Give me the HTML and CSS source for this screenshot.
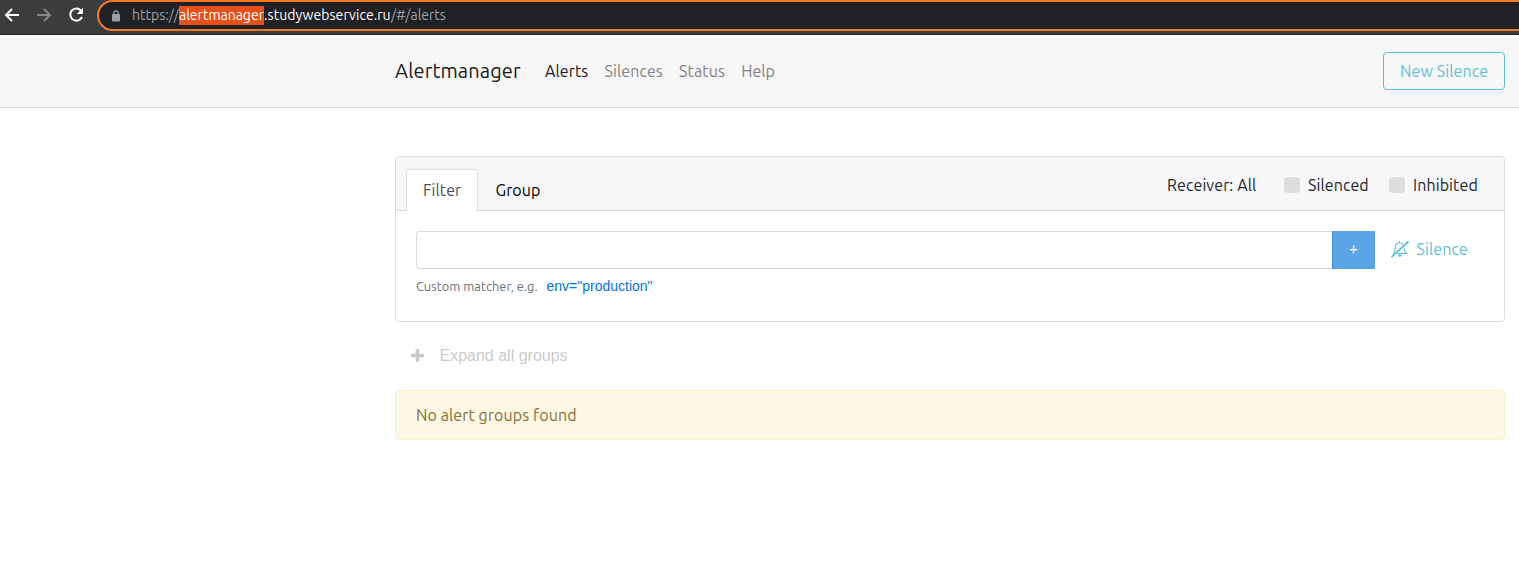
FILE: index.html
```html
<!DOCTYPE html>
<html lang="en">
<head>
<meta charset="utf-8">
<title>Alertmanager</title>
<link rel="stylesheet" href="styles.css">
</head>
<body>
<div class="browser">
  <svg class="back" width="16" height="16" viewBox="0 0 16 16"><path d="M15 8H2M8 2 2 8l6 6" fill="none" stroke="currentColor" stroke-width="2"/></svg>
  <svg class="forward" width="16" height="16" viewBox="0 0 16 16"><path d="M1 8h13M8 2l6 6-6 6" fill="none" stroke="currentColor" stroke-width="2"/></svg>
  <svg class="reload" width="16" height="16" viewBox="0 0 16 16"><path d="M12.8 3.3A6.1 6.1 0 1 0 14 10" fill="none" stroke="currentColor" stroke-width="2"/><path d="M15 .8V7H8.8z" fill="currentColor"/></svg>
  <div class="address">
    <svg class="lock" width="8" height="12" viewBox="0 0 8 12"><rect y="4" width="8" height="7.500" rx="1" fill="currentColor"/><path d="M1.800 4.500V3a2.200 2.200 0 0 1 4.400 0v1.500" fill="none" stroke="currentColor" stroke-width="1.200"/></svg>
    <span class="scheme">https://</span><span class="selected">alertmanager</span><span class="host">.studywebservice.ru</span><span class="path">/#/alerts</span>
  </div>
</div>
<header class="navbar">
  <a class="brand">Alertmanager</a>
  <nav class="links">
    <a class="link current">Alerts</a>
    <a class="link">Silences</a>
    <a class="link">Status</a>
    <a class="link">Help</a>
  </nav>
  <a class="new-silence">New Silence</a>
</header>
<main class="content">
  <section class="card">
    <div class="card-header">
      <a class="tab active">Filter</a>
      <a class="tab">Group</a>
      <div class="options">
        <span class="receiver">Receiver: All</span>
        <span class="box"></span><span class="silenced">Silenced</span>
        <span class="box"></span><span class="inhibited">Inhibited</span>
      </div>
    </div>
    <div class="card-body">
      <div class="row">
        <input class="matcher" type="text" aria-label="Matcher">
        <button class="add">+</button>
        <a class="silence">
          <svg width="19" height="18" viewBox="0 0 19 18" fill="none" stroke="currentColor"><path d="M.5 17 17.500 1.500" stroke-width="1.700"/><path d="M2.300 13.500C4 11.500 4.500 10 4.500 7c0-2.500 1.600-4.300 4-4.300 1.500 0 2.700.600 3.400 1.700M13 7.500c0 2.500.800 4.500 2.500 6H6.500M8.500 2.500V1" stroke-width="1.100"/><path d="M6.800 14.500a2.200 2.200 0 0 0 4.400 0z" fill="currentColor" stroke="none"/></svg>
          <span>Silence</span>
        </a>
      </div>
      <div class="hint"><span class="custom">Custom matcher, e.g.</span><a class="example">env="production"</a></div>
    </div>
  </section>
  <button class="expand"><svg width="13" height="13" viewBox="0 0 13 13"><path d="M5.500 0h2q.8 0 .8.800V4.700h3.900q.8 0 .8.800v2q0 .8-.8.800H8.300v3.900q0 .8-.8.800h-2q-.8 0-.8-.8V8.300H.8q-.8 0-.8-.8v-2q0-.8.8-.8h3.900V.8q0-.8.8-.8z" fill="currentColor"/></svg><span>Expand all groups</span></button>
  <div class="notice">No alert groups found</div>
</main>
</body>
</html>
```
FILE: styles.css
```css
* { box-sizing: border-box; }
body { margin: 0; height: 582px; overflow: hidden; background: #fff; color: #212529; font: 16px/24px "Ubuntu", "Noto Sans", sans-serif; letter-spacing: .1px; white-space: nowrap; }
svg { display: block; flex: none; }
.browser { height: 35px; display: flex; align-items: flex-start; background: #3c3c3c; border-bottom: 1px solid #202124; color: #fff; }
.back { margin: 7px 0 0 4px; }
.forward { margin: 7px 0 0 16px; color: #858585; }
.reload { margin: 7px 0 0 16px; }
.address { display: flex; align-items: center; flex: 1; height: 31px; margin: 0 -30px 0 13px; padding-left: 13px; background: #202124; border: 2px solid #f47b20; border-radius: 16px 0 0 16px; font-size: 14px; line-height: 19px; letter-spacing: 0; }
.lock { margin-right: 12px; color: #9aa0a6; }
.scheme { width: 47px; color: #9aa0a6; }
.selected { width: 85px; background: #e6501b; }
.host { width: 127px; letter-spacing: .06px; }
.path { color: #9aa0a6; }
.navbar { height: 73px; display: flex; align-items: center; padding: 0 14px 0 395px; background: #f7f7f7; border-bottom: 1px solid #d9d9d9; }
.brand { width: 150px; font-size: 20px; line-height: 30px; letter-spacing: .14px; color: #1a1a1a; }
.links { display: flex; gap: 16.2px; }
.link { color: #828282; }
.link.current { color: #1a1a1a; }
.new-silence { width: 122px; height: 38px; margin-left: auto; padding: 6px 16px; border: 1px solid #5bc0de; border-radius: 4px; color: #5bc0de; }
.content { width: 1110px; margin: 48px 0 0 395px; }
.card { height: 166px; border: 1px solid #dcdddd; border-radius: 4px; }
.card-header { display: flex; align-items: flex-end; height: 54px; padding-left: 10px; background: #f7f7f9; border-bottom: 1px solid #d9dadb; border-radius: 3px 3px 0 0; }
.tab { height: 41px; padding: 9px 17.5px 8px; color: #000; }
.tab.active { width: 72px; height: 42px; margin-bottom: -1px; padding: 8px 16px; background: #fff; border: 1px solid #ddd; border-bottom: 0; border-radius: 4px 4px 0 0; color: #495057; }
.options { display: flex; align-items: center; margin-left: auto; padding-right: 26px; margin-bottom: 13px; }
.receiver { width: 117px; }
.box { width: 16px; height: 16px; border-radius: 4px; background: #ddd; margin-right: 8px; }
.silenced { width: 81px; }
.inhibited { width: 65px; }
.card-body { padding: 20px; }
.row { display: flex; height: 38px; }
.matcher { width: 916px; border: 1px solid #d7d9da; border-right: 0; border-radius: 4px 0 0 4px; background: #fff; outline: 0; }
.add { width: 43px; padding: 0 1px 4px 0; border: 0; border-left: 1px solid #4396e0; background: #5ba5e7; color: #fff; font: 16px "Ubuntu", "Noto Sans", sans-serif; }
.silence { display: flex; align-items: center; height: 36px; margin-left: 16px; color: #5bc0de; }
.silence svg { margin-right: 6.5px; }
.hint { display: flex; align-items: center; height: 34px; }
.custom { width: 130.5px; font-size: 12.8px; letter-spacing: .03px; color: #687078; }
.example { color: #0275d8; font: 14px "Liberation Sans", Arial, sans-serif; letter-spacing: 0; }
.expand { display: flex; align-items: center; height: 38px; margin: 14px 0 0; padding: 0 16px; border: 0; background: none; color: #ccc; font: 16px "Liberation Sans", Arial, sans-serif; letter-spacing: 0; }
.expand span { margin-left: 15.5px; padding-top: 2px; }
.notice { height: 50px; margin-top: 16px; padding: 12px 20px; border: 1px solid #faf2cc; border-radius: 4px; background: #fcf8e3; color: #8a6d3b; }
```
